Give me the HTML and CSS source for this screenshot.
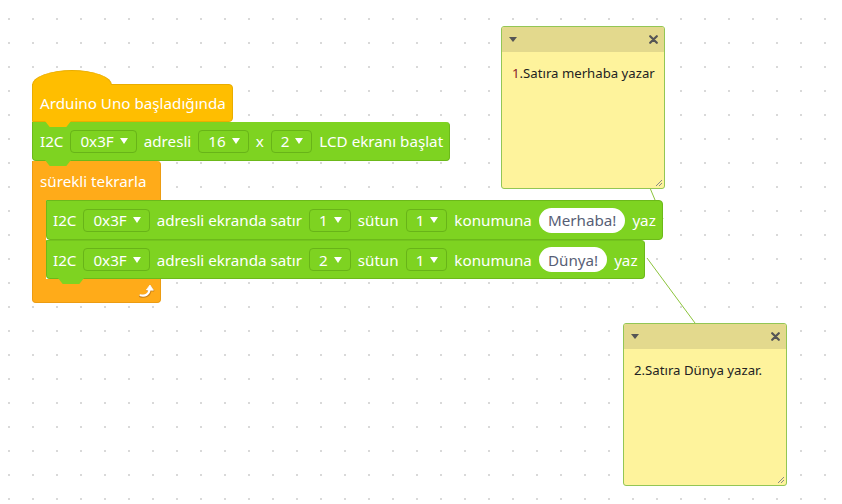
FILE: index.html
```html
<!DOCTYPE html>
<html lang="tr">
<head>
<meta charset="utf-8">
<title>Arduino blokları</title>
<link rel="stylesheet" href="styles.css">
</head>
<body>
<div class="canvas">
  <svg class="links" width="842" height="504" viewBox="0 0 842 504">
    <line x1="650" y1="188" x2="663" y2="219" />
    <line x1="647" y1="258" x2="695" y2="323" />
  </svg>

  <div class="stack">
    <div class="block hat"><span class="lbl">Arduino Uno başladığında</span></div>
    <div class="block green init">
      <span class="lbl">I2C</span>
      <span class="dd">0x3F<i class="tri"></i></span>
      <span class="lbl">adresli</span>
      <span class="dd">16<i class="tri"></i></span>
      <span class="lbl">x</span>
      <span class="dd">2<i class="tri"></i></span>
      <span class="lbl">LCD ekranı başlat</span>
    </div>
    <div class="loop">
      <div class="loop-top"><span class="lbl">sürekli tekrarla</span></div>
      <div class="loop-mid">
        <div class="loop-arm"></div>
        <div class="loop-body">
          <div class="block green inner first">
            <span class="lbl">I2C</span>
            <span class="dd">0x3F<i class="tri"></i></span>
            <span class="lbl">adresli ekranda satır</span>
            <span class="dd">1<i class="tri"></i></span>
            <span class="lbl">sütun</span>
            <span class="dd">1<i class="tri"></i></span>
            <span class="lbl">konumuna</span>
            <span class="pill">Merhaba!</span>
            <span class="lbl">yaz</span>
          </div>
          <div class="block green inner last">
            <span class="lbl">I2C</span>
            <span class="dd">0x3F<i class="tri"></i></span>
            <span class="lbl">adresli ekranda satır</span>
            <span class="dd">2<i class="tri"></i></span>
            <span class="lbl">sütun</span>
            <span class="dd">1<i class="tri"></i></span>
            <span class="lbl">konumuna</span>
            <span class="pill">Dünya!</span>
            <span class="lbl">yaz</span>
          </div>
        </div>
      </div>
      <div class="loop-bottom">
        <svg class="loop-arrow" width="18" height="16" viewBox="0 0 18 16">
          <path d="M2.5 13 C7 14 11.5 12.5 12 7" fill="none" stroke="#c7801a" stroke-width="3" stroke-linecap="round"/>
          <path d="M8.5 7.5 L12.3 2.5 L15.8 7.8 Z" fill="#c7801a" stroke="#c7801a" stroke-width="1.2" stroke-linejoin="round"/>
          <path d="M2.5 12.3 C7 13.3 11 11.8 11.5 6.5" fill="none" stroke="#fff" stroke-width="2.2" stroke-linecap="round"/>
          <path d="M8.3 7 L12 2 L15.4 7.2 Z" fill="#fff" stroke="#fff" stroke-width="0.8" stroke-linejoin="round"/>
        </svg>
      </div>
    </div>
  </div>

  <div class="note n1">
    <div class="note-head">
      <i class="note-tri"></i>
      <svg class="note-x" width="9" height="9" viewBox="0 0 9 9"><path d="M1.2 1.2 L7.8 7.8 M7.8 1.2 L1.2 7.8" stroke="#555" stroke-width="2.2" stroke-linecap="round"/></svg>
    </div>
    <div class="note-body"><span class="num">1</span>.Satıra merhaba yazar</div>
    <svg class="grip" width="10" height="10" viewBox="0 0 10 10"><path d="M9 3 L3 9 M9 6 L6 9" stroke="#888" stroke-width="1"/></svg>
  </div>

  <div class="note n2">
    <div class="note-head">
      <i class="note-tri"></i>
      <svg class="note-x" width="9" height="9" viewBox="0 0 9 9"><path d="M1.2 1.2 L7.8 7.8 M7.8 1.2 L1.2 7.8" stroke="#555" stroke-width="2.2" stroke-linecap="round"/></svg>
    </div>
    <div class="note-body">2.Satıra Dünya yazar.</div>
    <svg class="grip" width="10" height="10" viewBox="0 0 10 10"><path d="M9 3 L3 9 M9 6 L6 9" stroke="#888" stroke-width="1"/></svg>
  </div>
</div>
</body>
</html>
```

FILE: styles.css
```css
html, body {
  margin: 0;
  padding: 0;
}
body {
  font-family: "Noto Sans", "Open Sans", sans-serif;
  color: #fff;
}
.canvas {
  position: relative;
  width: 842px;
  height: 504px;
  overflow: hidden;
  background-color: #fff;
  background-image: radial-gradient(circle at 12px 12px, #d9d9d9 0, #d9d9d9 1px, transparent 1.4px);
  background-size: 24px 24px;
  background-position: -3px 7px;
}
.links {
  position: absolute;
  left: 0;
  top: 0;
}
.links line {
  stroke: #8cc43c;
  stroke-width: 1;
}

/* script stack on the free canvas */
.stack {
  position: absolute;
  left: 32px;
  top: 70px;
  display: flex;
  flex-direction: column;
  align-items: flex-start;
  font-size: 15.2px;
}
.block {
  position: relative;
  display: flex;
  align-items: center;
  gap: 7px;
  box-sizing: border-box;
  padding: 0 8px 0 7px;
  white-space: nowrap;
}
.lbl {
  line-height: 20px;
}
.hat {
  margin-top: 14px;
  height: 38px;
  background: #ffbe00;
  border: 1px solid #e9ad00;
  border-radius: 0 4px 4px 0;
  padding-right: 6px;
  z-index: 3;
}
.hat::before {
  content: "";
  position: absolute;
  left: -1px;
  top: -15px;
  width: 80px;
  height: 15px;
  background: #ffbe00;
  border: 1px solid #e9ad00;
  border-bottom: none;
  border-radius: 40px 40px 0 0 / 15px 15px 0 0;
  box-sizing: border-box;
}
.hat::after,
.init::after,
.inner.last::after {
  content: "";
  position: absolute;
  left: 12px;
  bottom: -6px;
  width: 26px;
  height: 6px;
  clip-path: polygon(0 0, 100% 0, 82% 100%, 18% 100%);
}
.hat::after { background: #ffbe00; }
.green {
  background: #7ed321;
  border: 1px solid #6cb91a;
  border-radius: 0 4px 4px 4px;
}
.init {
  height: 39px;
  border-top: none;
  z-index: 2;
  padding-right: 6px;
}
.init::after { background: #7ed321; }
.inner {
  height: 40px;
  padding-left: 6px;
  padding-right: 6px;
}
.inner.last {
  height: 39px;
  border-top-color: #74c41e;
  z-index: 2;
}
.inner.last::after { background: #7ed321; left: 11px; }

.dd {
  display: inline-flex;
  align-items: center;
  height: 23px;
  box-sizing: border-box;
  padding: 0 8px 0 9px;
  border: 1px solid #68b418;
  border-radius: 4px;
  line-height: 20px;
}
.tri {
  display: inline-block;
  width: 0;
  height: 0;
  margin-left: 6px;
  border-left: 4.5px solid transparent;
  border-right: 4.5px solid transparent;
  border-top: 6px solid #fff;
}
.pill {
  display: inline-flex;
  align-items: center;
  height: 25px;
  padding: 0 9px;
  border-radius: 13px;
  background: #fff;
  color: #575e75;
  line-height: 20px;
}

/* forever loop */
.loop {
  display: flex;
  flex-direction: column;
  align-items: flex-start;
}
.loop-top {
  display: flex;
  align-items: center;
  box-sizing: border-box;
  width: 129px;
  height: 39px;
  padding-left: 7px;
  background: #ffab19;
  border: 1px solid #ec9c12;
  border-top: none;
  border-bottom: none;
  border-radius: 0 4px 0 0;
}
.loop-mid {
  display: flex;
}
.loop-arm {
  width: 13px;
  background: #ffab19;
  border-left: 1px solid #ec9c12;
}
.loop-body {
  display: flex;
  flex-direction: column;
  align-items: flex-start;
}
.loop-bottom {
  display: flex;
  align-items: center;
  justify-content: flex-end;
  box-sizing: border-box;
  width: 129px;
  height: 24px;
  padding-right: 4px;
  background: #ffab19;
  border: 1px solid #ec9c12;
  border-top: none;
  border-radius: 0 0 4px 4px;
}

/* comments */
.note {
  position: absolute;
  width: 164px;
  height: 163px;
  box-sizing: border-box;
  background: #fef39c;
  border: 1px solid #93c655;
  border-radius: 3px;
  color: #222;
  font-size: 13.2px;
}
.n1 { left: 501px; top: 26px; }
.n2 { left: 623px; top: 323px; }
.note-head {
  display: flex;
  align-items: center;
  justify-content: space-between;
  height: 25px;
  padding: 0 6px 0 7px;
  background: #e3d98d;
  border-radius: 2px 2px 0 0;
}
.note-tri {
  display: inline-block;
  width: 0;
  height: 0;
  border-left: 4.5px solid transparent;
  border-right: 4.5px solid transparent;
  border-top: 5px solid #555;
}
.note-body {
  padding: 11px 4px 0 10px;
  line-height: 20px;
  white-space: nowrap;
}
.num { color: #8b1a2a; }
.grip {
  position: absolute;
  right: 1px;
  bottom: 1px;
}
```
